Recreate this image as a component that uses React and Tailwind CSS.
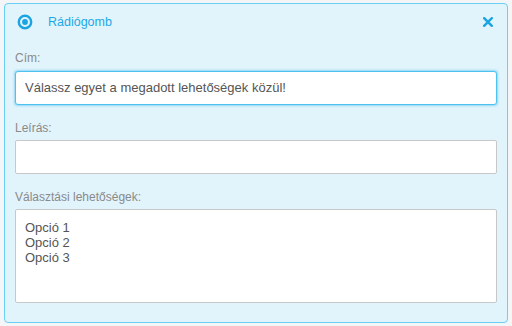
export default function App() {
  return (
    <div className="w-[512px] h-[326px] bg-[#f4f5f6] pt-[3px] pl-[4px]" style={{ fontFamily: '"Liberation Sans", Arial, sans-serif' }}>
      <div className="w-[504px] h-[320px] bg-[#e1f3fb] border border-[#69d0f4] rounded-[4px] px-[10px] flex flex-col">
        <div className="h-[36px] flex items-center justify-between">
          <div className="flex items-center">
            <svg width="16" height="16" viewBox="0 0 16 16" className="ml-[2px]">
              <circle cx="8" cy="8" r="6.2" fill="none" stroke="#1ba4e2" strokeWidth="2.4" />
              <circle cx="8" cy="8" r="2.9" fill="#1ba4e2" />
            </svg>
            <span className="ml-[15px] text-[12.5px] text-[#1ba9e6]">Rádiógomb</span>
          </div>
          <svg width="10" height="10" viewBox="0 0 10 10" className="mr-[4px]">
            <path d="M1.2 1.2 L8.8 8.8 M8.8 1.2 L1.2 8.8" stroke="#1ba4e2" strokeWidth="2.4" strokeLinecap="square" />
          </svg>
        </div>
        <label className="mt-[10px] text-[12px] leading-[17px] text-[#8a8a8a]">Cím:</label>
        <div className="mt-[4px] h-[34px] bg-white border border-[#4ec2ef] rounded-[3px] shadow-[0_0_2px_1px_rgba(80,195,240,0.55)] flex items-center px-[9px] text-[13px] text-[#555]">
          Válassz egyet a megadott lehetőségek közül!
        </div>
        <label className="mt-[15px] text-[12px] leading-[17px] text-[#8a8a8a]">Leírás:</label>
        <div className="mt-[3px] h-[34px] bg-white border border-[#c8c8c8] rounded-[2px]"></div>
        <label className="mt-[15px] text-[12px] leading-[17px] text-[#8a8a8a]">Választási lehetőségek:</label>
        <div className="mt-[3px] h-[94px] bg-white border border-[#c8c8c8] rounded-[2px] px-[9px] pt-[10px] text-[13px] leading-[15px] text-[#555]">
          <div>Opció 1</div>
          <div>Opció 2</div>
          <div>Opció 3</div>
        </div>
      </div>
    </div>
  );
}
